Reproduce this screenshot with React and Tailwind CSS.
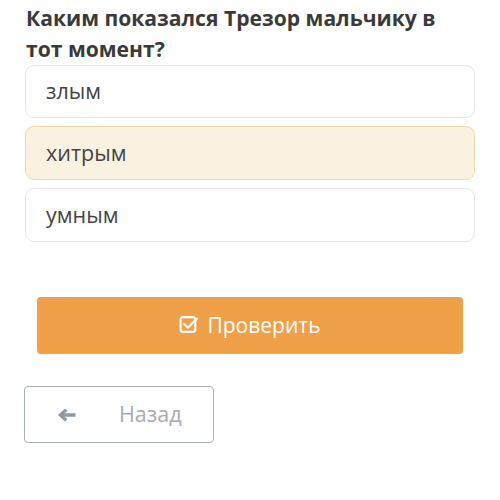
import React from "react";

export default function App() {
  return (
    <div className="w-[500px] h-[500px] bg-white" style={{ fontFamily: '"Open Sans", sans-serif' }}>
      <div className="px-[25px] pt-[2px]">
        <h1 className="text-[21.1px] leading-[31px] font-bold text-[#3a3a3a] pl-px">
          Каким показался Трезор мальчику в<br />тот момент?
        </h1>
        <div className="mt-[1px] flex flex-col gap-[8px]">
          <div className="h-[53px] rounded-[9px] border border-[#e6e6e6] bg-white flex items-center pl-[20px] text-[21.5px] text-[#444]">
            злым
          </div>
          <div className="h-[54px] rounded-[9px] border border-[#e8dba8] bg-[#faf2e1] flex items-center pl-[20px] text-[21.5px] text-[#444]">
            хитрым
          </div>
          <div className="h-[54px] rounded-[9px] border border-[#e6e6e6] bg-white flex items-center pl-[20px] text-[21.5px] text-[#444]">
            умным
          </div>
        </div>
      </div>
      <div className="px-[37px] mt-[55px]">
        <button className="w-full h-[57px] rounded-[4px] bg-[#f0a048] flex items-center justify-center gap-[7px] text-white text-[21px]">
          <svg width="21" height="19" viewBox="0 0 20 18" fill="none" stroke="#fff" strokeWidth="2" strokeLinecap="round" strokeLinejoin="round" className="mb-[2px]">
            <rect x="1.5" y="2" width="14" height="14" rx="2.5" />
            <path d="M5 8.5 L8.5 12 L17 3.5" />
          </svg>
          <span>Проверить</span>
        </button>
      </div>
      <div className="px-[24px] mt-[32px]">
        <button className="w-[190px] h-[57px] rounded-[4px] border border-[#a9b1ba] bg-white flex items-center text-[#a3acb6] text-[21.5px]">
          <svg width="20" height="16" viewBox="0 0 20 16" className="ml-[32px]" fill="#8f9aa6">
            <path d="M1 8 L8 1.5 L10.5 4 L7.5 6.3 H18.5 V9.7 H7.5 L10.5 12 L8 14.5 Z" />
          </svg>
          <span className="ml-[42px]">Назад</span>
        </button>
      </div>
    </div>
  );
}
